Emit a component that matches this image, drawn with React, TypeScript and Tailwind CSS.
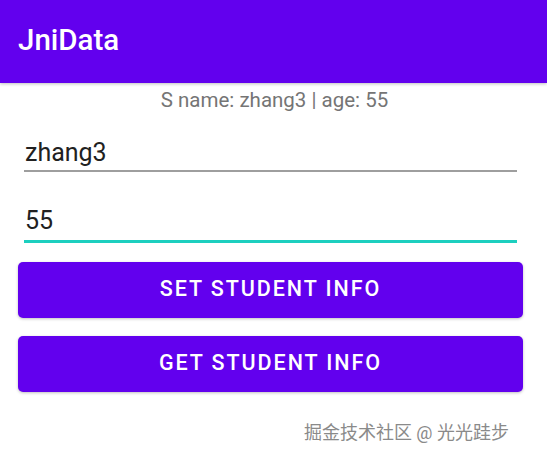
import React from 'react';

const font = { fontFamily: 'Roboto, "Noto Sans", sans-serif' };

export default function App() {
  return (
    <div className="w-[547px] h-[458px] bg-white relative overflow-hidden" style={font}>
      <div className="h-[83px] bg-[#6200ee] flex items-center pl-[18px] shadow-[0_1px_3px_rgba(0,0,0,0.25)]">
        <span className="text-white text-[29.5px] font-medium leading-none pb-[1px]">JniData</span>
      </div>

      <div className="text-center text-[#757575] text-[20.5px] leading-none mt-[7px] pl-[2px]">
        S name: zhang3 | age: 55
      </div>

      <div className="px-[24px] mt-[9px] w-[541px]">
        <div className="border-b-[2px] border-[#9e9e9e] h-[52px] flex items-end pb-[5px] pl-[1px]">
          <span className="text-[#212121] text-[25px] leading-none">zhang3</span>
        </div>
        <div className="border-b-[3px] border-[#1ccfbf] h-[71px] flex items-end pb-[7px] pl-[1px]">
          <span className="text-[#212121] text-[25px] leading-none">55</span>
        </div>
      </div>

      <div className="px-[18px] w-[541px] mt-[19px] flex flex-col gap-[18px]">
        <button className="h-[56px] rounded-[5px] bg-[#6200ee] text-white text-[21.5px] font-medium tracking-[0.09em] shadow-[0_1px_3px_rgba(0,0,0,0.25)]">
          SET STUDENT INFO
        </button>
        <button className="h-[56px] rounded-[5px] bg-[#6200ee] text-white text-[21.5px] font-medium tracking-[0.09em] shadow-[0_1px_3px_rgba(0,0,0,0.25)]">
          GET STUDENT INFO
        </button>
      </div>

      <div
        className="absolute right-[38px] top-[424px] text-[18px] text-[#8a8a8a] leading-none"
        style={{ fontFamily: 'Roboto, "Noto Sans CJK SC", sans-serif', textShadow: '0 0 1px rgba(255,255,255,0.8)' }}
      >
        掘金技术社区 @ 光光跬步
      </div>
    </div>
  );
}
